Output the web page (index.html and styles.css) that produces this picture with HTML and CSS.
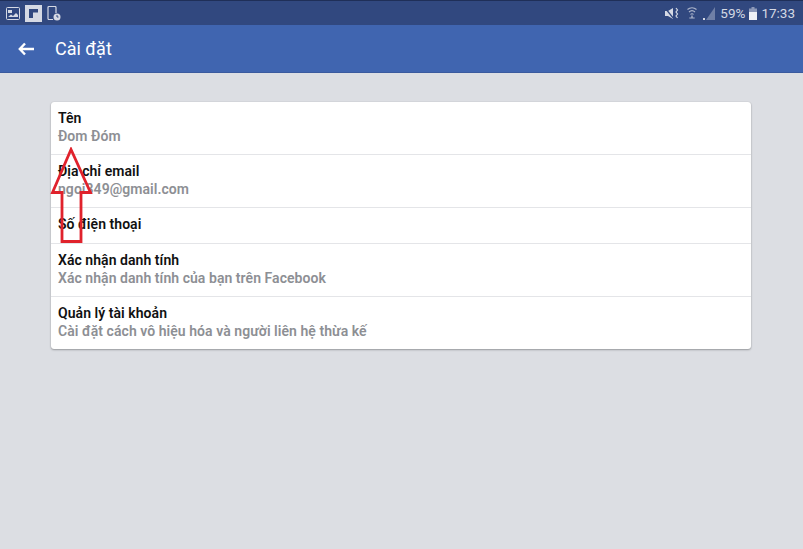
FILE: index.html
```html
<!DOCTYPE html>
<html lang="vi">
<head>
<meta charset="utf-8">
<title>Cài đặt</title>
<link rel="stylesheet" href="styles.css">
</head>
<body>
<div class="status">
  <div class="status-left">
    <svg class="ic" width="14" height="13" viewBox="0 0 14 13"><rect x="0.500" y="0.500" width="13" height="12" rx="1" fill="none" stroke="#d5d9e4"/><path d="M2 3h4v3H2z" fill="#d5d9e4"/><path d="M2 10l3-2.500 2 1.500 3-3 2 2v2H2z" fill="#d5d9e4"/></svg>
    <svg class="ic" width="17" height="17" viewBox="0 0 17 17"><rect width="17" height="17" fill="#d5d9e4"/><path d="M4 4h9v3.500H8V13H4z" fill="#31487f"/></svg>
    <svg class="ic" width="14" height="15" viewBox="0 0 14 15"><path d="M6 13.500H2a1 1 0 0 1-1-1v-11a1 1 0 0 1 1-1h6a1 1 0 0 1 1 1V7" fill="none" stroke="#d5d9e4" stroke-width="1.200"/><circle cx="10" cy="11" r="3.500" fill="#d5d9e4"/><path d="M10 9v2h1.500" stroke="#31487f" fill="none"/></svg>
  </div>
  <div class="status-right">
    <svg class="ic mute" width="14" height="13" viewBox="0 0 14 13"><path d="M0 4h3l5-3v11L3 9H0z" fill="#d5d9e4"/><path d="M0 1l9 11" stroke="#31487f" stroke-width="1.300"/><path d="M11 1l1.500 2-1.500 2 1.500 2-1.500 2 1.500 2" stroke="#d5d9e4" fill="none" stroke-width="1.200"/></svg>
    <svg class="ic wifi" width="10" height="13" viewBox="0 0 10 13"><path d="M.5 2.500a7 7 0 0 1 9 0M2 5a4.500 4.500 0 0 1 6 0M3.500 7.500a2 2 0 0 1 3 0" fill="none" stroke="#aeb6cc" stroke-width="1.100"/><path d="M4.300 8.500h1.400v2h2v1h-5.400v-1h2z" fill="#aeb6cc"/></svg>
    <svg class="ic signal" width="12" height="13" viewBox="0 0 12 13"><path d="M12 0v13H3z" fill="#6f7fa6"/><path d="M0 11h2v2H0z" fill="#d5d9e4"/></svg>
    <span class="pct">59%</span>
    <svg class="ic batt" width="8" height="13" viewBox="0 0 8 13"><path d="M2.500 0h3v1.500H8V13H0V1.500h2.500z" fill="#8c98b8"/><path d="M0 5h8v8H0z" fill="#eef0f5"/></svg>
    <span class="time">17:33</span>
  </div>
</div>
<header class="appbar">
  <svg class="back" width="16" height="14" viewBox="0 0 16 14"><path d="M7 1.500 1.800 7 7 12.500M2 7h14" fill="none" stroke="#fff" stroke-width="2.400"/></svg>
  <h1 class="title">Cài đặt</h1>
</header>
<main class="content">
  <section class="card">
    <div class="row"><div class="label">Tên</div><div class="sub">Đom Đóm</div></div>
    <div class="row"><div class="label">Địa chỉ email</div><div class="sub">ngoi349@gmail.com</div></div>
    <div class="row single"><div class="label">Số điện thoại</div></div>
    <div class="row"><div class="label">Xác nhận danh tính</div><div class="sub">Xác nhận danh tính của bạn trên Facebook</div></div>
    <div class="row"><div class="label">Quản lý tài khoản</div><div class="sub">Cài đặt cách vô hiệu hóa và người liên hệ thừa kế</div></div>
  </section>
</main>
<svg class="arrow" width="44" height="98" viewBox="0 0 44 98"><path d="M21 2.500 2.500 45.500H12V94.500H31V45.500H40.500z" fill="none" stroke="#e0222c" stroke-width="2.800"/></svg>
</body>
</html>
```
FILE: styles.css
```css
* { box-sizing: border-box; }
html, body { margin: 0; height: 100%; }
body {
  background: #dcdee3;
  font-family: Roboto, "Liberation Sans", sans-serif;
  position: relative;
  overflow: hidden;
}
.status {
  height: 25px;
  background: #31487f;
  border-top: 1px solid #1f2f58;
  display: flex;
  justify-content: space-between;
  align-items: center;
  padding: 0 8px 0 6px;
  color: #d5d9e4;
}
.status-left { display: flex; align-items: center; gap: 5px; }
.status-right { display: flex; align-items: center; font-size: 13.500px; }
.ic { display: block; }
.wifi { margin-left: 8px; }
.signal { margin-left: 6px; }
.pct { margin-left: 5px; }
.batt { margin: 0 4px 0 4px; }
.appbar {
  height: 48px;
  background: #4065b0;
  border-bottom: 1px solid #3a5a9e;
  display: flex;
  align-items: center;
  padding-left: 18px;
}
.back { display: block; }
.title {
  margin: 0 0 0 21px;
  font-size: 18px;
  font-weight: 400;
  color: #fff;
}
.content { padding: 29px 52px 0 51px; }
.card {
  background: #fff;
  border-radius: 3px;
  box-shadow: 0 1px 2px rgba(0,0,0,.3), 0 0 1px rgba(0,0,0,.2);
}
.row {
  height: 53px;
  padding: 8px 7px 0;
  border-bottom: 1px solid #e4e5e8;
}
.row:last-child { border-bottom: 0; height: 52px; }
.row.single { height: 36px; }
.label {
  font-size: 14px;
  line-height: 17px;
  font-weight: 600;
  letter-spacing: .05px;
  color: #111;
}
.sub {
  margin-top: 1px;
  font-size: 14px;
  line-height: 17px;
  font-weight: 600;
  letter-spacing: .05px;
  color: #8d8f94;
}
.arrow { position: absolute; left: 50px; top: 147px; }
```
